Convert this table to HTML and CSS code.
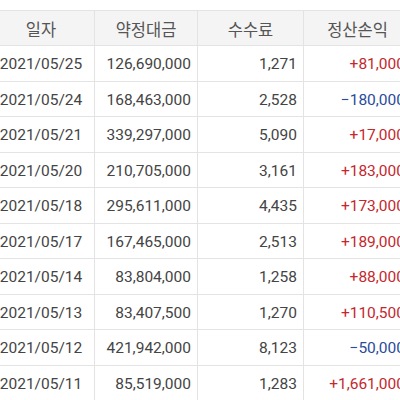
FILE: index.html
```html
<!DOCTYPE html>
<html lang="ko">
<head>
<meta charset="utf-8">
<link rel="stylesheet" href="styles.css">
</head>
<body>
<div class="table">
  <div class="row head">
    <div class="cell c">일자</div>
    <div class="cell c">약정대금</div>
    <div class="cell c">수수료</div>
    <div class="cell c">정산손익</div>
  </div>
  <div class="row"><div class="cell c">2021/05/25</div><div class="cell r">126,690,000</div><div class="cell r">1,271</div><div class="cell r up">+81,000</div></div>
  <div class="row"><div class="cell c">2021/05/24</div><div class="cell r">168,463,000</div><div class="cell r">2,528</div><div class="cell r down">−180,000</div></div>
  <div class="row"><div class="cell c">2021/05/21</div><div class="cell r">339,297,000</div><div class="cell r">5,090</div><div class="cell r up">+17,000</div></div>
  <div class="row"><div class="cell c">2021/05/20</div><div class="cell r">210,705,000</div><div class="cell r">3,161</div><div class="cell r up">+183,000</div></div>
  <div class="row"><div class="cell c">2021/05/18</div><div class="cell r">295,611,000</div><div class="cell r">4,435</div><div class="cell r up">+173,000</div></div>
  <div class="row"><div class="cell c">2021/05/17</div><div class="cell r">167,465,000</div><div class="cell r">2,513</div><div class="cell r up">+189,000</div></div>
  <div class="row"><div class="cell c">2021/05/14</div><div class="cell r">83,804,000</div><div class="cell r">1,258</div><div class="cell r up">+88,000</div></div>
  <div class="row"><div class="cell c">2021/05/13</div><div class="cell r">83,407,500</div><div class="cell r">1,270</div><div class="cell r up">+110,500</div></div>
  <div class="row"><div class="cell c">2021/05/12</div><div class="cell r">421,942,000</div><div class="cell r">8,123</div><div class="cell r down">−50,000</div></div>
  <div class="row"><div class="cell c">2021/05/11</div><div class="cell r">85,519,000</div><div class="cell r">1,283</div><div class="cell r up">+1,661,000</div></div>
</div>
</body>
</html>
```
FILE: styles.css
```css
html, body {
  margin: 0;
  padding: 0;
  background: #ffffff;
  overflow: hidden;
}
body {
  font-family: Roboto, "Noto Sans CJK KR", sans-serif;
  font-size: 15.5px;
  color: #444444;
}
.table {
  margin-top: 10px;
  margin-left: -12px;
  width: 424px;
  border-top: 1px solid #e3e3e3;
}
.row {
  display: grid;
  grid-template-columns: 107px 103px 106px 108px;
  height: 35.5px;
}
.head {
  height: 35px;
  background: #f4f4f4;
}
.cell {
  display: flex;
  align-items: center;
  border-right: 1px solid #e3e3e3;
  border-bottom: 1px solid #e3e3e3;
  padding: 2px 6px 0 6px;
  white-space: nowrap;
  box-sizing: border-box;
}
.c { justify-content: center; }
.r { justify-content: flex-end; }
.head .cell {
  color: #555555;
  font-size: 16.5px;
}
.up { color: #c4282e; }
.down { color: #2b4b9b; }
```
